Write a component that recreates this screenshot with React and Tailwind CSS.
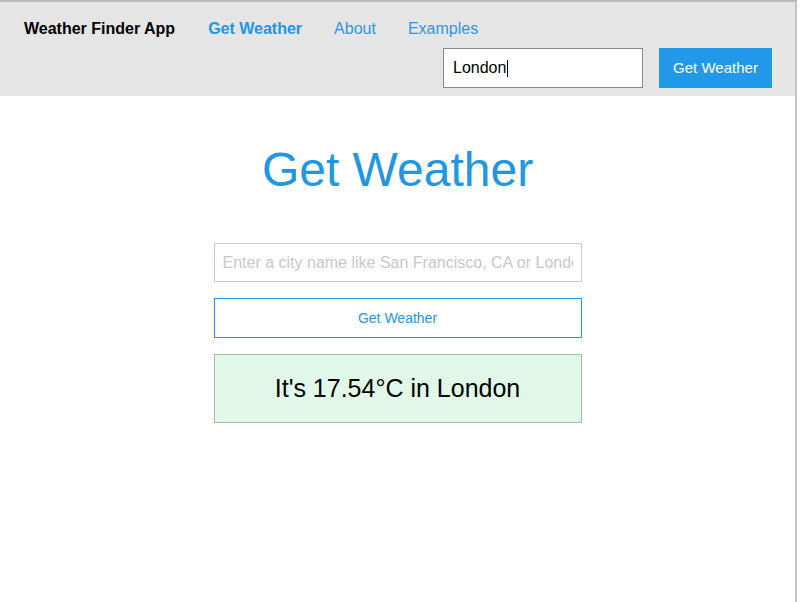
export default function App() {
  return (
    <div className="w-[797px] h-[602px] bg-white border-t-2 border-t-[#b9b9b9] border-r-2 border-r-[#c4c4c4] font-['Liberation_Sans',Arial,sans-serif] overflow-hidden">
      {/* Navbar */}
      <nav className="bg-[#e5e5e5] h-[94px] pl-6 pr-[23px] pt-[17px]">
        <div className="flex items-center h-[20px] text-base leading-5">
          <span className="font-bold text-black">Weather Finder App</span>
          <a className="ml-[33px] font-bold text-[#2196e8]">Get Weather</a>
          <a className="ml-[32px] text-[#2f96e6]">About</a>
          <a className="ml-[32px] text-[#2f96e6]">Examples</a>
        </div>
        <div className="flex justify-end items-center mt-[9px]">
          <div className="w-[200px] h-[40px] bg-white border border-[#8a8a8a] flex items-center px-[9px] text-base text-black">
            London<span className="inline-block w-px h-[17px] bg-black ml-px" />
          </div>
          <button className="ml-[16px] w-[113px] h-[40px] bg-[#2299e8] text-white text-[15px]">Get Weather</button>
        </div>
      </nav>

      {/* Main */}
      <main className="flex flex-col items-center">
        <h1 className="mt-[46px] text-[48px] leading-[56px] text-[#2196e3]">Get Weather</h1>
        <div className="mt-[45px] w-[368px] flex flex-col gap-[16px]">
          <input
            className="w-full h-[39px] border border-[#cccccc] px-[8px] text-base outline-none placeholder:text-[#c8c8c8]"
            placeholder="Enter a city name like San Francisco, CA or London"
          />
          <button className="w-full h-[40px] border border-[#2196e8] text-[#2196e8] text-[14px] bg-white">Get Weather</button>
          <div className="w-full h-[69px] bg-[#e1f8e9] border border-[#a4bca9] flex items-center justify-center text-[25px] text-black">
            It's 17.54°C in London
          </div>
        </div>
      </main>
    </div>
  )
}
